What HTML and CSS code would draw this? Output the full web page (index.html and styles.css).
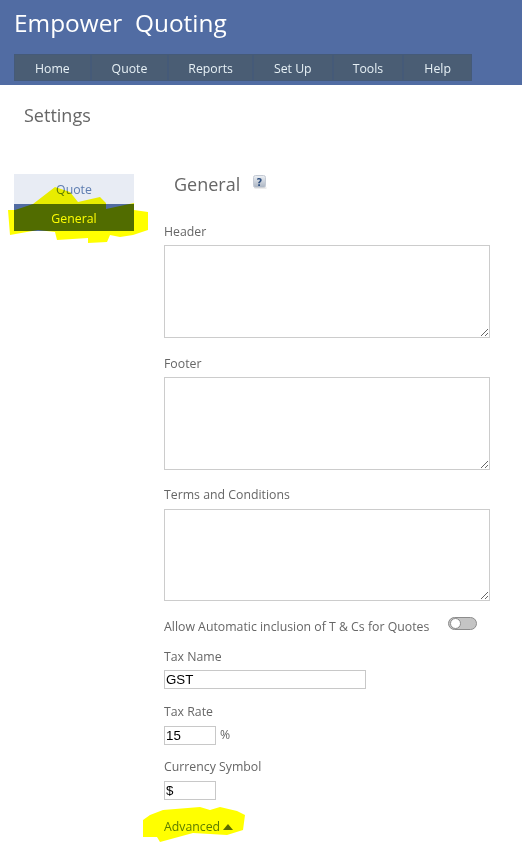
FILE: index.html
```html
<!DOCTYPE html>
<html lang="en">
<head>
<meta charset="utf-8">
<title>Empower Quoting</title>
<link rel="stylesheet" href="styles.css">
</head>
<body>
<header class="top">
  <h1 class="brand">Empower&nbsp; Quoting</h1>
  <nav class="nav">
    <a class="nav-item w-home">Home</a>
    <a class="nav-item w-quote">Quote</a>
    <a class="nav-item w-reports">Reports</a>
    <a class="nav-item w-setup">Set Up</a>
    <a class="nav-item w-tools">Tools</a>
    <a class="nav-item w-help">Help</a>
  </nav>
</header>
<h2 class="page-title">Settings</h2>
<main class="layout">
  <aside class="side">
    <a class="side-item">Quote</a>
    <a class="side-item active">General</a>
  </aside>
  <section class="form">
    <div class="form-head">
      <h3 class="form-title">General</h3>
      <svg class="help" width="14" height="14" viewBox="0 0 14 14"><defs><linearGradient id="hg" x1="0" y1="0" x2="0" y2="1"><stop offset="0" stop-color="#eef1f5"/><stop offset="1" stop-color="#aab4c2"/></linearGradient></defs><rect x="0.5" y="0.5" width="12" height="12" rx="2" fill="url(#hg)" stroke="#c4cad4"/><rect x="1.5" y="12.5" width="12" height="1" fill="#d8d8d8"/><text x="6.5" y="10.5" text-anchor="middle" class="help-q">?</text></svg>
    </div>
    <label class="label l-header">Header</label>
    <textarea class="area a-1"></textarea>
    <label class="label l-footer">Footer</label>
    <textarea class="area a-2"></textarea>
    <label class="label l-terms">Terms and Conditions</label>
    <textarea class="area a-3"></textarea>
    <div class="toggle-row">
      <span class="label">Allow Automatic inclusion of T &amp; Cs for Quotes</span>
      <span class="toggle"><span class="knob"></span></span>
    </div>
    <label class="label l-tax">Tax Name</label>
    <input class="input i-wide" value="GST">
    <label class="label l-rate">Tax Rate</label>
    <div class="rate-row"><input class="input i-small" value="15"><span class="label pct">%</span></div>
    <label class="label l-cur">Currency Symbol</label>
    <input class="input i-small" value="$">
    <div class="advanced">Advanced <span class="caret"></span></div>
  </section>
</main>
<svg class="marker" width="522" height="845" viewBox="0 0 522 845">
  <path class="ink" d="M8 210 L15 210 L33 204 L55 187 L70 192 L78 202 L100 197 L106 203 L106 209 L134 203 L134 210 L148 212 L148 230 L133 235 L120 237 L110 235 L107 242 L88 243 L88 238 L57 240 L55 232 L38 230 L10 235 Z"/>
  <path class="ink" d="M143 820 L150 815 L163 810 L200 807 L210 810 L220 807 L237 811 L245 815 L243 830 L227 835 L193 833 L160 842 L157 837 L143 837 Z"/>
</svg>
</body>
</html>
```
FILE: styles.css
```css
* { box-sizing: border-box; }
html, body { margin: 0; padding: 0; }
body {
  width: 522px;
  height: 845px;
  overflow: hidden;
  position: relative;
  background: #fff;
  font-family: "Open Sans", "Noto Sans", sans-serif;
  color: #666;
}
.top {
  height: 85px;
  background: #516ca3;
  padding: 5px 14px 0;
}
.brand {
  margin: 0;
  height: 49px;
  font-size: 24.4px;
  line-height: 36px;
  font-weight: 400;
  color: #fff;
}
.nav {
  display: flex;
  width: 458px;
  height: 27px;
  background: #455a78;
  padding: 1px;
  gap: 2px;
}
.nav-item {
  background: #4a5d74;
  color: #e6f0f5;
  font-size: 12.3px;
  line-height: 28px;
  text-align: center;
}
.w-home { width: 75px; }
.w-quote { width: 76px; }
.w-reports { width: 83px; }
.w-setup { width: 78px; }
.w-tools { width: 69px; }
.w-help { width: 67px; }
.page-title {
  margin: 0;
  padding: 17px 0 0 24px;
  height: 89px;
  font-size: 18px;
  line-height: 27px;
  font-weight: 400;
  color: #666;
}
.layout {
  display: flex;
  padding-left: 14px;
}
.side {
  width: 120px;
  flex: none;
  display: flex;
  flex-direction: column;
}
.side-item {
  height: 30px;
  background: #e8ecf4;
  color: #5c7cb0;
  font-size: 12.3px;
  line-height: 31px;
  text-align: center;
}
.side-item.active {
  height: 27px;
  background: #516ca3;
  color: #fff;
  line-height: 29px;
}
.form {
  margin-left: 30px;
  width: 326px;
  display: flex;
  flex-direction: column;
  align-items: flex-start;
}
.form-head {
  display: flex;
  align-items: flex-start;
  height: 48px;
  padding-left: 10px;
  gap: 13px;
}
.form-title {
  margin: 0;
  font-size: 18px;
  line-height: 20px;
  font-weight: 400;
  color: #666;
}
.help { margin-top: 1px; }
.help-q {
  font-family: "DejaVu Sans", sans-serif;
  font-size: 10px;
  font-weight: 700;
  fill: #2f4f7f;
}
.label {
  font-size: 12.3px;
  line-height: 18px;
  color: #666;
}
.l-header { margin-top: 1px; }
.area {
  display: block;
  width: 326px;
  height: 93px;
  margin: 4px 0 0;
  border: 1px solid #ccc;
  background: #fff;
  padding: 2px;
}
.a-3 { height: 92px; margin-top: 5px; }
.l-footer { margin-top: 17px; }
.l-terms { margin-top: 16px; }
.toggle-row {
  display: flex;
  width: 326px;
  margin-top: 17px;
  align-items: flex-start;
  gap: 19px;
}
.toggle {
  position: relative;
  width: 29px;
  height: 13px;
  margin-top: -1px;
  border-radius: 7px;
  background: #c4c4c4;
  border: 1px solid #8c8c8c;
}
.knob {
  position: absolute;
  left: 1px;
  top: 0;
  width: 11px;
  height: 11px;
  border-radius: 50%;
  background: #fff;
  border: 1px solid #8c8c8c;
}
.input {
  display: block;
  margin: 4px 0 0;
  height: 19px;
  border: 1px solid #c8c8c8;
  padding: 0 0 0 1px;
  font-family: "Liberation Sans", Arial, sans-serif;
  font-size: 13.3px;
  color: #000;
  background: #fff;
}
.i-wide { width: 202px; }
.i-small { width: 52px; margin-top: 5px; }
.l-tax { margin-top: 12px; }
.l-rate { margin-top: 14px; }
.l-cur { margin-top: 13px; }
.rate-row {
  display: flex;
  align-items: center;
  gap: 4px;
}
.pct { margin-top: 4px; }
.advanced {
  margin-top: 18px;
  font-size: 12.3px;
  line-height: 18px;
  color: #5c7cb0;
  display: flex;
  align-items: center;
  gap: 3px;
}
.caret {
  width: 0;
  height: 0;
  border-left: 5px solid transparent;
  border-right: 5px solid transparent;
  border-bottom: 6px solid #5c6b80;
}
.marker {
  position: absolute;
  left: 0;
  top: 0;
  mix-blend-mode: multiply;
  pointer-events: none;
}
.ink { fill: #ffff00; }
```
